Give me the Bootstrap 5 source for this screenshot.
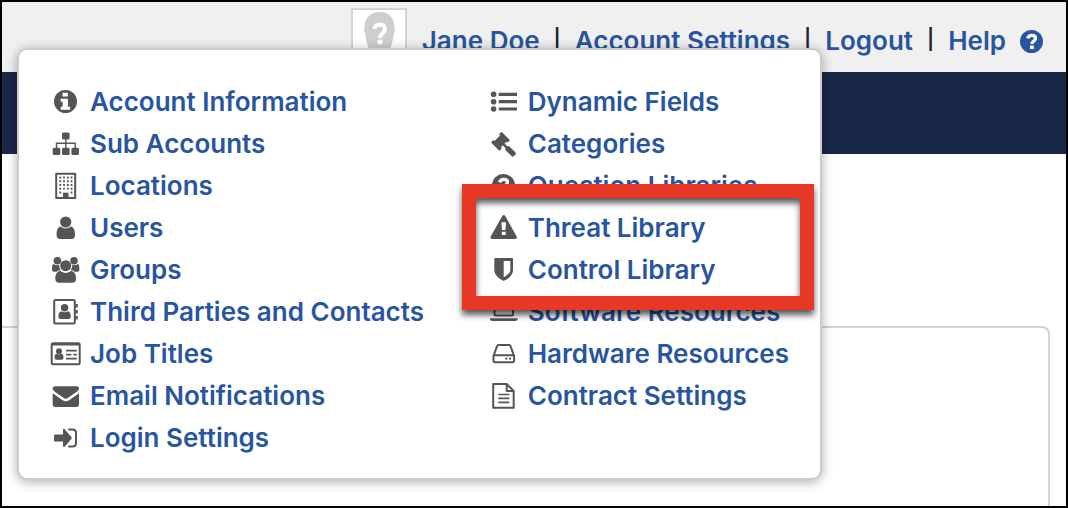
<!DOCTYPE html>
<html lang="en">
<head>
<meta charset="utf-8">
<meta name="viewport" content="width=device-width, initial-scale=1">
<title>Account Settings</title>
<link href="https://cdn.jsdelivr.net/npm/bootstrap@5.3.0/dist/css/bootstrap.min.css" rel="stylesheet">
<style>
  body { font-family: Inter, "Liberation Sans", sans-serif; font-size: 26px; line-height: 42px; font-weight: 600; color: #1c2433; }
  .app-frame { border: 2px solid #000; height: 100vh; }
  .top-bar { background: #f0f0f0; height: 70px; padding-right: 23px; }
  .brand-bar { background: #1a2848; height: 82px; }
  .avatar { width: 56px; height: 56px; border: 2px solid #d4d4d4; background: #fff; margin-top: 6px; margin-right: 15px; }
  .account-links { padding-top: 8px; gap: 14px; }
  .divider { font-size: 20px; font-weight: 600; padding-bottom: 4px; }
  a { color: #28559f; text-decoration: none; }
  a:hover { color: #173a75; }
  .settings-menu { top: 46px; right: 244px; width: 805px; padding: 31px 31px 19px; background: #fff; border: 2px solid #ccc; border-radius: 10px; box-shadow: 0 2px 12px rgba(0,0,0,.32); z-index: 10; }
  .main-column { width: 438px; }
  .settings-menu svg { width: 32px; height: 32px; margin-right: 8px; color: #555; }
  .callout::after { content: ""; position: absolute; inset: -23px -25px -19px -26px; border: 14px solid #e83725; filter: drop-shadow(0 5px 3px rgba(0,0,0,.65)); pointer-events: none; }
  .content-panel { margin-top: 172px; margin-right: 16px; border: 2px solid #d4d4d4; border-width: 2px 2px 0 0; border-top-right-radius: 8px; }
  svg { flex: none; fill: currentColor; }
  .line { fill: none; stroke: currentColor; stroke-width: 2; stroke-linejoin: round; }
  .cut { fill: #fff; }
</style>
</head>
<body>
<div class="app-frame d-flex flex-column overflow-hidden position-relative">
  <header class="top-bar d-flex justify-content-end flex-shrink-0">
    <div class="avatar overflow-hidden">
      <svg class="d-block" width="52" height="52" viewBox="0 0 52 52" role="img" aria-label="Profile picture"><path fill="#cecece" d="M26.500 2C17 2 12 8 11.500 17c-1 2 0 5 .8 7 .8 8 3.200 14 4.700 18v8h19v-8c1.500-4 3.900-10 4.700-18 .8-2 1.800-5 .8-7C41 8 36 2 26.500 2z"/><path d="M21.500 19c.5-3.500 2.800-4.500 5.500-4.500 3 0 5 1.700 5 4.500 0 4-5 4-5 9" fill="none" stroke="#fff" stroke-width="4"/><circle cx="27" cy="32" r="2.600" fill="#fff"/></svg>
    </div>
    <nav class="account-links d-flex align-items-center text-nowrap" aria-label="Account">
      <a href="#">Jane Doe</a><span class="divider">|</span>
      <a href="#">Account Settings</a><span class="divider">|</span>
      <a href="#">Logout</a><span class="divider">|</span>
      <a href="#">Help</a>
      <a href="#" class="d-flex" aria-label="Help topics"><svg width="23" height="23" viewBox="4 4 23 23"><use href="#question"/></svg></a>
    </nav>
  </header>
  <div class="brand-bar flex-shrink-0"></div>
  <main class="content-panel flex-grow-1"></main>

  <div class="settings-menu position-absolute d-flex text-nowrap">
    <ul class="main-column list-unstyled mb-0">
      <li><a href="#" class="d-flex align-items-center"><svg viewBox="0 0 32 32"><circle cx="15.500" cy="15.500" r="11.500"/><path class="cut" d="M12.600 6.700h5.200v3.700h-5.200zM10.700 12.700h7.200v8h2.200v3h-9.400v-3h2v-5h-2z"/></svg>Account Information</a></li>
      <li><a href="#" class="d-flex align-items-center"><svg viewBox="0 0 32 32"><rect x="12" y="4.500" width="7.600" height="7" rx="1.500"/><rect x="2.700" y="19.700" width="7.600" height="7.300" rx="1.500"/><rect x="12" y="19.700" width="7.600" height="7.300" rx="1.500"/><rect x="21.400" y="19.700" width="7.600" height="7.300" rx="1.500"/><path d="M15.800 11v9M6.500 20v-4.700h18.700V20" fill="none" stroke="currentColor" stroke-width="1.400"/></svg>Sub Accounts</a></li>
      <li><a href="#" class="d-flex align-items-center"><svg viewBox="0 0 32 32"><rect class="line" x="6.200" y="3.700" width="19" height="24.300"/><path d="M10.300 6.600v17M14 6.600v13M17.800 6.600v13M21.500 6.600v17" fill="none" stroke="currentColor" stroke-width="1.800" stroke-dasharray="1.800 1.950"/><path d="M13 22.700h5.500V28H13z"/></svg>Locations</a></li>
      <li><a href="#" class="d-flex align-items-center"><svg viewBox="0 0 32 32"><circle cx="15.700" cy="10" r="5.600"/><path d="M10.600 14.500c3 2.600 7.200 2.600 10.200 0 3 .5 4.200 4 4.200 8.500 0 2.400-1.300 4-3.400 4H10c-2.100 0-3.400-1.600-3.400-4 0-4.500 1-8 4-8.500z"/></svg>Users</a></li>
      <li><a href="#" class="d-flex align-items-center"><svg viewBox="0 0 32 32"><circle cx="7.400" cy="6.700" r="3.800"/><circle cx="24" cy="6.700" r="3.800"/><circle cx="15.700" cy="11.700" r="5.500"/><path d="M10.300 16.800c3.200 2.800 7.600 2.800 10.800 0 3.600.7 5 4 5 8 0 2.500-1.500 4-3.800 4H9.100c-2.300 0-3.800-1.500-3.800-4 0-4 1.400-7.300 5-8zM3.500 10c2 1.500 4 1.500 5.700.8-.2 2.700.6 4.300 1.800 5.500-2 0-3.200.3-4.300 1.500H4c-1.200 0-2-.7-2-2 0-2 .2-5.800 1.500-5.800zM27.900 10c-2 1.500-4 1.500-5.700.8.2 2.700-.6 4.300-1.800 5.500 2 0 3.200.3 4.300 1.500h2.700c1.200 0 2-.7 2-2 0-2-.2-5.800-1.500-5.800z"/></svg>Groups</a></li>
      <li><a href="#" class="d-flex align-items-center"><svg viewBox="0 0 32 32"><rect class="line" x="4.200" y="4" width="20.600" height="23.600" rx="1.500"/><path d="M25.500 8h2.300v3.500h-2.300zM25.500 14h2.300v3.500h-2.300zM25.500 20h2.300v3.500h-2.300z"/><circle cx="14.600" cy="11.800" r="3.700"/><path d="M11.200 15.200c2 1.400 4.800 1.400 6.800 0 2 .5 2.800 2.500 2.800 5.300 0 1.500-.8 2.500-2.200 2.500h-8c-1.400 0-2.200-1-2.200-2.500 0-2.800.8-4.800 2.800-5.300z"/></svg>Third Parties and Contacts</a></li>
      <li><a href="#" class="d-flex align-items-center"><svg viewBox="0 0 32 32"><rect class="line" x="1.700" y="5.200" width="28" height="21" rx="1.500"/><path d="M1.700 5h28v2.500h-28z"/><circle cx="9" cy="13.200" r="3"/><path d="M6.500 15.700c1.500 1 3.500 1 5 0 1.500.4 2 1.900 2 4 0 1.300-.6 2-1.700 2H6.300c-1.100 0-1.700-.7-1.700-2 0-2.100.4-3.600 1.900-4z"/><path d="M16 12.600h10.800M16 16.600h5.400m2 0h3.400M16 20.700h10.800" fill="none" stroke="currentColor" stroke-width="1.800"/></svg>Job Titles</a></li>
      <li><a href="#" class="d-flex align-items-center"><svg viewBox="0 0 32 32"><path d="M5 6.300h21.600c1.500 0 2.400.9 2.400 2 0 1.500-1 2.600-2.200 3.500l-8.600 6c-1.800 1.300-3 1.300-4.800 0l-8.600-6c-1.200-.9-2.100-2-2.100-3.300 0-1.300 1-2.200 2.300-2.200z"/><path d="M2.700 13.200l9.900 7c2.200 1.500 4.200 1.500 6.400 0l10-7v11.300c0 1.500-1 2.500-2.500 2.500H5.200c-1.500 0-2.500-1-2.500-2.500z"/></svg>Email Notifications</a></li>
      <li><a href="#" class="d-flex align-items-center"><svg viewBox="0 0 32 32"><path d="M5 12.500h8V7.800c0-1 1-1.300 1.700-.6l6.600 7.800c.6.700.6 1.200 0 1.900l-6.600 7.800c-.7.700-1.700.4-1.700-.6v-4.700H5c-.7 0-1-.3-1-1v-5c0-.6.3-.9 1-.9z"/><path class="line" d="M18.300 7.400h4.200c2.200 0 3.500 1.300 3.500 3.500v10c0 2.200-1.300 3.500-3.500 3.500h-4.200"/></svg>Login Settings</a></li>
    </ul>
    <ul class="list-unstyled mb-0 flex-grow-1">
      <li><a href="#" class="d-flex align-items-center"><svg viewBox="0 0 32 32"><circle cx="5.600" cy="8.300" r="2.800"/><circle cx="5.600" cy="15.700" r="2.800"/><circle cx="5.600" cy="23" r="2.800"/><path d="M10.700 6.700H29v3.200H10.700zM10.700 14.100H29v3.200H10.700zM10.700 21.400H29v3.200H10.700z"/></svg>Dynamic Fields</a></li>
      <li><a href="#" class="d-flex align-items-center"><svg viewBox="0 0 32 32"><g transform="translate(12.500 13.300) rotate(-45)"><path d="M-5 -4.500H5v9H-5z"/><rect x="-7.500" y="-6" width="3.600" height="12" rx="1"/><rect x="3.900" y="-6" width="3.600" height="12" rx="1"/><path d="M-1.300 4h2.600v6h-2.600z"/><rect x="-2.700" y="8.500" width="5.400" height="11.500" rx="1.800"/></g></svg>Categories</a></li>
      <li><a href="#" class="d-flex align-items-center"><svg viewBox="0 0 32 32"><g id="question"><circle cx="15.500" cy="15.500" r="11.500"/><path d="M11.600 12.300c.8-2 2.200-2.900 4.200-2.900 2.200 0 3.700 1.200 3.700 2.900 0 2.800-3.500 2.700-3.500 5.700" fill="none" stroke="#fff" stroke-width="3.400"/><path class="cut" d="M14 19.500h3.800v3.600H14z"/></g></svg>Question Libraries</a></li>
      <li class="callout position-relative">
        <ul class="list-unstyled">
          <li><a href="#" class="d-flex align-items-center"><svg viewBox="0 0 32 32"><path d="M14.300 4c.7-1.300 2.200-1.300 2.900 0l11.500 20.600c.7 1.300 0 2.400-1.500 2.400h-23c-1.500 0-2.200-1.100-1.500-2.400z"/><path class="cut" d="M13.400 10.300H18l-.5 7.700H14zM13.800 19.700h3.900V23h-3.900z"/></svg>Threat Library</a></li>
          <li><a href="#" class="d-flex align-items-center"><svg viewBox="0 0 32 32"><path d="M7.300 4H24c.7 0 1 .4 1 1v11c0 5-4.500 8.700-9.300 10.900C10.900 24.700 6.300 21 6.300 16V5c0-.6.4-1 1-1z"/><path class="cut" d="M15.700 7h6.600v9c0 3-3 5.400-6.600 7.300z"/></svg>Control Library</a></li>
        </ul>
      </li>
      <li><a href="#" class="d-flex align-items-center"><svg viewBox="0 0 32 32"><rect class="line" x="6.500" y="7" width="18.600" height="12.600" rx="1.500"/><path d="M2 22.300h27.600v1c0 1-1 1.700-2.500 1.700H4.500C3 25 2 24.300 2 23.300z"/></svg>Software Resources</a></li>
      <li><a href="#" class="d-flex align-items-center"><svg viewBox="0 0 32 32"><path class="line" d="M5.500 17.800L9 8.300c.3-.8.700-1.200 1.500-1.200h10.600c.8 0 1.200.4 1.500 1.200l3.500 9.500v4.800c0 1-.6 1.600-1.600 1.600H7.100c-1 0-1.600-.6-1.600-1.600zM5.500 17.300h20.600"/><circle cx="18.300" cy="20.700" r="1.100"/><circle cx="22" cy="20.700" r="1.100"/></svg>Hardware Resources</a></li>
      <li><a href="#" class="d-flex align-items-center"><svg viewBox="0 0 32 32"><path class="line" d="M5.200 4h13.500l7 7v16.800H5.200zM18.700 4v7h7"/><path d="M10.300 14.500h11M10.300 18.400h11M10.300 22.300h11" fill="none" stroke="currentColor" stroke-width="1.700"/></svg>Contract Settings</a></li>
    </ul>
  </div>
</div>
<script src="https://cdn.jsdelivr.net/npm/bootstrap@5.3.0/dist/js/bootstrap.bundle.min.js"></script>
</body>
</html>
